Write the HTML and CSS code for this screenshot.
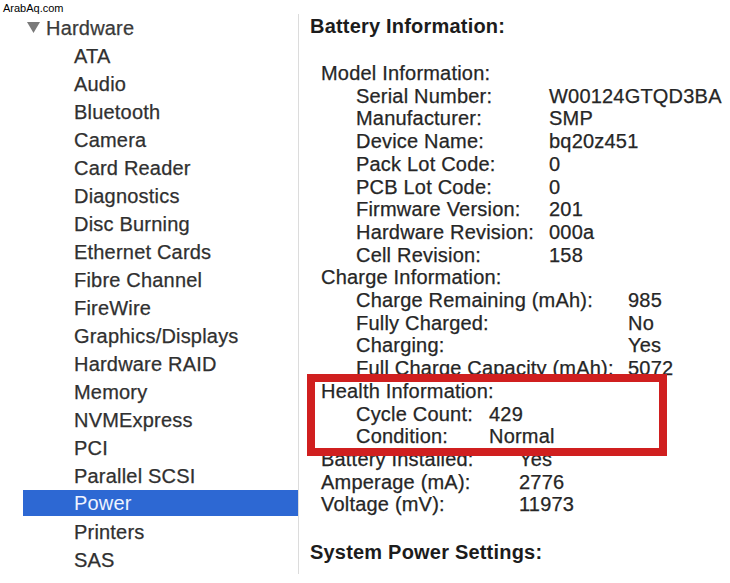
FILE: index.html
```html
<!DOCTYPE html>
<html lang="en">
<head>
    <meta charset="UTF-8">
    <title>System Information - Power</title>
    <link rel="stylesheet" href="styles.css">
</head>
<body>
    <div class="window">
        <div class="watermark">ArabAq.com</div>

        <nav class="sidebar">
            <div class="tree-head">
                <svg class="disclosure" width="13" height="12" viewBox="0 0 13 12">
                    <polygon points="0,1 13,1 6.5,12" fill="#7a7a7a"/>
                </svg>
                Hardware
            </div>
            <ul class="tree">
                <li>ATA</li>
                <li>Audio</li>
                <li>Bluetooth</li>
                <li>Camera</li>
                <li>Card Reader</li>
                <li>Diagnostics</li>
                <li>Disc Burning</li>
                <li>Ethernet Cards</li>
                <li>Fibre Channel</li>
                <li>FireWire</li>
                <li>Graphics/Displays</li>
                <li>Hardware RAID</li>
                <li>Memory</li>
                <li>NVMExpress</li>
                <li>PCI</li>
                <li>Parallel SCSI</li>
                <li class="selected">Power</li>
                <li>Printers</li>
                <li>SAS</li>
            </ul>
        </nav>

        <main class="detail">
            <h2>Battery Information:</h2>

            <div class="section">
                <div class="group-title">Model Information:</div>
                <dl class="props model">
                    <dt>Serial Number:</dt><dd>W00124GTQD3BA</dd>
                    <dt>Manufacturer:</dt><dd>SMP</dd>
                    <dt>Device Name:</dt><dd>bq20z451</dd>
                    <dt>Pack Lot Code:</dt><dd>0</dd>
                    <dt>PCB Lot Code:</dt><dd>0</dd>
                    <dt>Firmware Version:</dt><dd>201</dd>
                    <dt>Hardware Revision:</dt><dd>000a</dd>
                    <dt>Cell Revision:</dt><dd>158</dd>
                </dl>

                <div class="group-title">Charge Information:</div>
                <dl class="props charge">
                    <dt>Charge Remaining (mAh):</dt><dd>985</dd>
                    <dt>Fully Charged:</dt><dd>No</dd>
                    <dt>Charging:</dt><dd>Yes</dd>
                    <dt>Full Charge Capacity (mAh):</dt><dd>5072</dd>
                </dl>

                <div class="group-title">Health Information:</div>
                <dl class="props health">
                    <dt>Cycle Count:</dt><dd>429</dd>
                    <dt>Condition:</dt><dd>Normal</dd>
                </dl>

                <dl class="props top">
                    <dt>Battery Installed:</dt><dd>Yes</dd>
                    <dt>Amperage (mA):</dt><dd>2776</dd>
                    <dt>Voltage (mV):</dt><dd>11973</dd>
                </dl>
            </div>

            <h2 class="next">System Power Settings:</h2>
        </main>

        <!-- red marker drawn over the health block -->
        <div class="highlight"></div>
    </div>
</body>
</html>
```

FILE: styles.css
```css
* {
    margin: 0;
    padding: 0;
    box-sizing: border-box;
}

body {
    width: 730px;
    height: 583px;
    overflow: hidden;
    background: #fff;
    font-family: "Liberation Sans", Arial, sans-serif;
    font-size: 20px;
    letter-spacing: 0.2px;
    color: #262626;
    -webkit-text-stroke: 0.25px currentColor;
}

.window {
    position: relative;
    display: flex;
    height: 583px;
    padding-top: 14px;
}

.watermark {
    position: absolute;
    left: 3px;
    top: 2px;
    font-size: 11px;
    letter-spacing: 0;
    color: #000;
    -webkit-text-stroke: 0;
}

/* ---------- sidebar ---------- */

.sidebar {
    width: 299px;
    height: 560px;
    border-right: 1px solid #dcdcdc;
    flex-shrink: 0;
}

.tree-head {
    display: flex;
    align-items: center;
    height: 28px;
    padding-left: 27px;
    color: #3a3a3a;
}

.disclosure {
    margin-right: 6px;
    margin-top: -2px;
}

.tree {
    list-style: none;
}

.tree li {
    height: 28px;
    line-height: 28px;
    padding-left: 74px;
    color: #303030;
}

.tree li.selected {
    height: 26px;
    line-height: 26px;
    margin-bottom: 2px;
    margin-left: 23px;
    padding-left: 51px;
    background: #2d68d3;
    color: #eef3ff;
    -webkit-text-stroke: 0;
}

/* ---------- detail pane ---------- */

.detail {
    flex: 1;
    padding-left: 11px;
}

h2 {
    font-size: 20px;
    font-weight: bold;
    line-height: 24px;
    color: #1c1c1c;
    -webkit-text-stroke: 0;
}

h2.next {
    margin-top: 24px;
}

.section {
    margin-top: 24px;
    padding-left: 11px;
    line-height: 22.7px;
}

.props {
    display: grid;
    padding-left: 35px;
}

.props dd {
    margin: 0;
}

.model {
    grid-template-columns: 193px auto;
}

.charge {
    grid-template-columns: 272px auto;
}

.health {
    grid-template-columns: 133px auto;
}

.top {
    padding-left: 0;
    grid-template-columns: 198px auto;
}

.highlight {
    position: absolute;
    left: 307px;
    top: 374px;
    width: 360px;
    height: 82px;
    border: 8px solid #d01f1f;
}
```
